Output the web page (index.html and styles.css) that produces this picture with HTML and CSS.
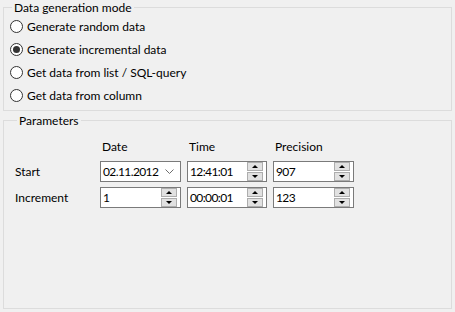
FILE: index.html
```html
<!DOCTYPE html>
<html>
  <head>
    <title>Data generation</title>
    <link rel="stylesheet" href="styles.css">
  </head>
  <body>
    <fieldset class="group mode">
      <legend>Data generation mode</legend>
      <div class="option"><span class="radio"></span>Generate random data</div>
      <div class="option"><span class="radio checked"></span>Generate incremental data</div>
      <div class="option"><span class="radio"></span>Get data from list / SQL-query</div>
      <div class="option"><span class="radio"></span>Get data from column</div>
    </fieldset>

    <fieldset class="group params">
      <legend>Parameters</legend>
      <div class="grid">
        <span></span>
        <span class="head">Date</span>
        <span class="head">Time</span>
        <span class="head">Precision</span>

        <span class="label">Start</span>
        <div class="field">
          <span class="value">02.11.2012</span>
          <svg class="chevron" width="9" height="5" viewBox="0 0 9 5"><path d="M0.5 0.5 L4.5 4.5 L8.5 0.5" fill="none" stroke="#6d6d6d" stroke-width="1"/></svg>
        </div>
        <div class="field">
          <span class="value">12:41:01</span>
          <span class="spin"><span class="btn up"></span><span class="btn down"></span></span>
        </div>
        <div class="field">
          <span class="value">907</span>
          <span class="spin"><span class="btn up"></span><span class="btn down"></span></span>
        </div>

        <span class="label">Increment</span>
        <div class="field">
          <span class="value">1</span>
          <span class="spin"><span class="btn up"></span><span class="btn down"></span></span>
        </div>
        <div class="field">
          <span class="value">00:00:01</span>
          <span class="spin"><span class="btn up"></span><span class="btn down"></span></span>
        </div>
        <div class="field">
          <span class="value">123</span>
          <span class="spin"><span class="btn up"></span><span class="btn down"></span></span>
        </div>
      </div>
    </fieldset>
  </body>
</html>
```

FILE: styles.css
```css
html, body {
  margin: 0;
  height: 312px;
}

body {
  background-color: #f0f0f0;
  font-family: 'Lato', 'Noto Sans', sans-serif;
  font-size: 12px;
  color: #000;
  display: flex;
  flex-direction: column;
  padding: 0 3px 3px 3px;
  box-sizing: border-box;
}

.group {
  border: 1px solid #dcdcdc;
  margin: 0;
  min-width: 0;
}

.group legend {
  line-height: 15px;
  padding: 0 2px;
  margin-left: 2px;
}

.mode {
  padding: 0 0 3px 6px;
}

.option {
  height: 23px;
  display: flex;
  align-items: center;
}

.radio {
  width: 11px;
  height: 11px;
  border: 1px solid #333;
  border-radius: 50%;
  background-color: #fff;
  margin-right: 4px;
  position: relative;
}

.radio.checked::after {
  content: "";
  position: absolute;
  left: 2px;
  top: 2px;
  width: 7px;
  height: 7px;
  border-radius: 50%;
  background-color: #333;
}

.params {
  flex: 1;
  margin-top: 2px;
  padding: 8px 0 0 11px;
}

.grid {
  display: grid;
  grid-template-columns: 79px 81px 80px 81px;
  grid-template-rows: 20px 21px 21px;
  column-gap: 6px;
  row-gap: 5px;
  align-items: center;
}

.head {
  padding-left: 2px;
}

.field {
  height: 21px;
  box-sizing: border-box;
  border: 1px solid #7a7a7a;
  background-color: #fff;
  display: flex;
  align-items: center;
  padding-left: 2px;
  position: relative;
}

.value {
  flex: 1;
  letter-spacing: -0.6px;
}

.chevron {
  margin-right: 6px;
}

.spin {
  display: flex;
  flex-direction: column;
  gap: 1px;
  margin-right: 3px;
}

.btn {
  width: 14px;
  height: 7px;
  border: 1px solid #adadad;
  background-color: #e1e1e1;
  position: relative;
}

.btn::after {
  content: "";
  position: absolute;
  left: 4px;
  border-left: 3px solid transparent;
  border-right: 3px solid transparent;
}

.up::after {
  top: 2px;
  border-bottom: 3px solid #000;
}

.down::after {
  top: 2px;
  border-top: 3px solid #000;
}
```
